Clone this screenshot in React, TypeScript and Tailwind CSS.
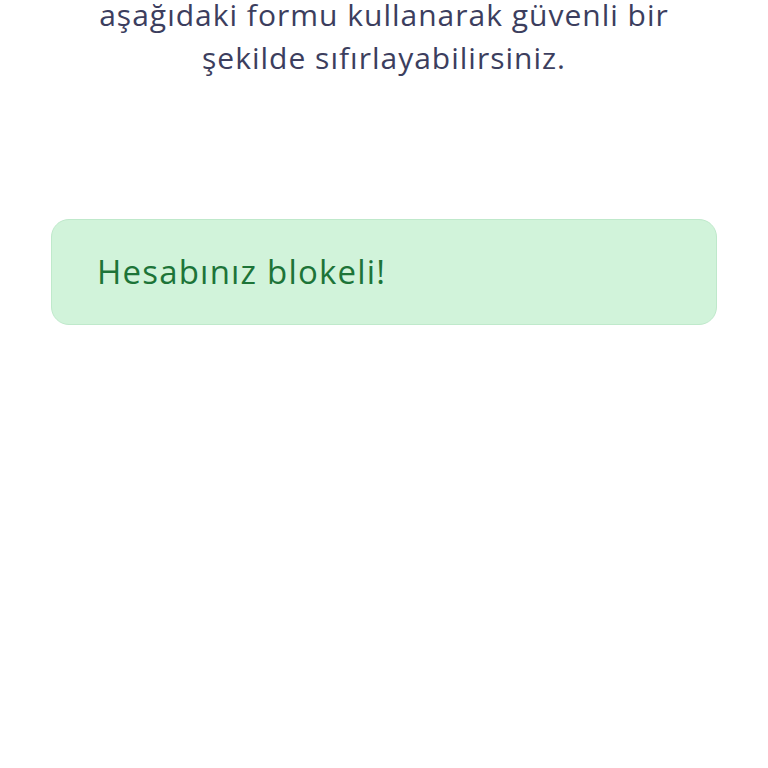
import React from 'react';

export default function App() {
  return (
    <div className="min-h-screen w-full bg-white overflow-hidden" style={{ fontFamily: '"Open Sans", "Noto Sans", sans-serif' }}>
      <div className="px-[51px]">
        <p className="-mt-[7px] text-center text-[30px] leading-[43px] tracking-[1px] text-[#3c3e5e]">
          aşağıdaki formu kullanarak güvenli bir
          <br />
          şekilde sıfırlayabilirsiniz.
        </p>

        <div className="mt-[140px] flex h-[106px] items-center rounded-[18px] border border-[#bfe9cb] bg-[#d1f3da] px-[45px]">
          <span className="text-[33px] tracking-[1.2px] text-[#1d7438]">Hesabınız blokeli!</span>
        </div>
      </div>
    </div>
  );
}
